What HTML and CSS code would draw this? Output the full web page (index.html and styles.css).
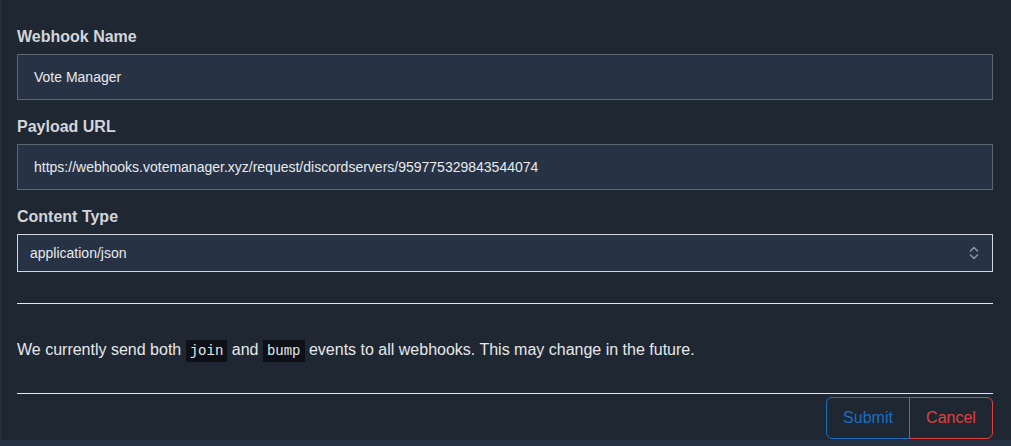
FILE: index.html
```html
<!DOCTYPE html>
<html>
<head>
<meta charset="utf-8">
<link rel="stylesheet" href="styles.css">
</head>
<body>
<div class="card">
  <label class="field-label">Webhook Name</label>
  <div class="input">Vote Manager</div>
  <label class="field-label">Payload URL</label>
  <div class="input">https://webhooks.votemanager.xyz/request/discordservers/959775329843544074</div>
  <label class="field-label">Content Type</label>
  <div class="select">
    <span>application/json</span>
    <svg class="chev" width="10" height="16" viewBox="0 0 10 16"><path d="M1.5 6 L5 2.5 L8.5 6 M1.5 10 L5 13.5 L8.5 10" fill="none" stroke="#8a93a0" stroke-width="1.6" stroke-linecap="round" stroke-linejoin="round"/></svg>
  </div>
  <hr class="rule rule-top">
  <p class="note">We currently send both <code>join</code> and <code>bump</code> events to all webhooks. This may change in the future.</p>
  <hr class="rule">
  <div class="actions">
    <div class="btn-group">
      <button class="btn btn-submit">Submit</button>
      <button class="btn btn-cancel">Cancel</button>
    </div>
  </div>
</div>
</body>
</html>
```
FILE: styles.css
```css
html, body {
  margin: 0;
  padding: 0;
  background: #263141;
  height: 446px;
  overflow: hidden;
}
body {
  padding-left: 1px;
  font-family: "Liberation Sans", Arial, sans-serif;
}
.card {
  background: #1f2733;
  padding: 25px 18px 1px 16px;
}
.field-label {
  display: block;
  font-weight: bold;
  font-size: 16px;
  line-height: 24px;
  color: #d2d5da;
  margin-bottom: 5px;
}
.input {
  box-sizing: border-box;
  height: 46px;
  background: #273345;
  border: 1px solid #5d6774;
  color: #e8eaed;
  font-size: 14px;
  display: flex;
  align-items: center;
  padding-left: 16px;
  margin-bottom: 15px;
}
.select {
  box-sizing: border-box;
  height: 38px;
  background: #273345;
  border: 1px solid #d5d8dc;
  color: #e8eaed;
  font-size: 14px;
  display: flex;
  align-items: center;
  justify-content: space-between;
  padding: 0 13px 0 12px;
}
.chev { display: block; }
.rule {
  border: 0;
  border-top: 1px solid #e4e6e9;
  margin: 0;
}
.rule-top { margin-top: 31px; }
.note {
  margin: 34px 0 30px;
  font-size: 16px;
  line-height: 24px;
  color: #e6e8eb;
}
.note code {
  font-family: "Liberation Mono", "DejaVu Sans Mono", monospace;
  font-size: 14px;
  background: #0d1117;
  color: #e6e6e6;
  padding: 3px 4px;
}
.actions {
  display: flex;
  justify-content: flex-end;
  margin-top: 3px;
}
.btn-group { display: flex; }
.btn {
  font-family: "Liberation Sans", Arial, sans-serif;
  font-size: 16px;
  background: transparent;
  height: 42px;
  width: 84px;
  padding: 0;
  cursor: pointer;
}
.btn-submit {
  color: #1a6fc0;
  border: 1px solid #1a6fc0;
  border-radius: 6px 0 0 6px;
}
.btn-cancel {
  color: #e0403e;
  border: 1px solid #e0403e;
  border-radius: 0 6px 6px 0;
  margin-left: -1px;
}
```
